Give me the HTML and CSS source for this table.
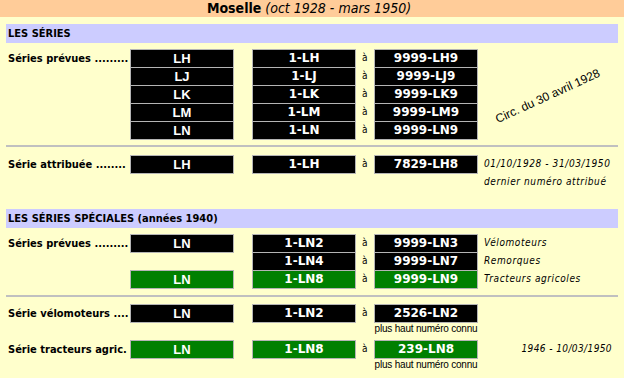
FILE: index.html
```html
<!DOCTYPE html>
<html lang="fr">
<head>
<meta charset="utf-8">
<title>Moselle</title>
<link rel="stylesheet" href="styles.css">
</head>
<body>
<div class="title"><b>Moselle</b> <i>(oct 1928 - mars 1950)</i></div>
<div class="content">
  <div class="band">LES SÉRIES</div>

  <div class="grid rows5">
    <div class="label">Séries prévues .........</div>
    <div class="plate c1 r1">LH</div>
    <div class="plate c1 r2">LJ</div>
    <div class="plate c1 r3">LK</div>
    <div class="plate c1 r4">LM</div>
    <div class="plate c1 r5">LN</div>
    <div class="plate c2 r1">1-LH</div>
    <div class="plate c2 r2">1-LJ</div>
    <div class="plate c2 r3">1-LK</div>
    <div class="plate c2 r4">1-LM</div>
    <div class="plate c2 r5">1-LN</div>
    <div class="a r1">à</div>
    <div class="a r2">à</div>
    <div class="a r3">à</div>
    <div class="a r4">à</div>
    <div class="a r5">à</div>
    <div class="plate c3 r1">9999-LH9</div>
    <div class="plate c3 r2">9999-LJ9</div>
    <div class="plate c3 r3">9999-LK9</div>
    <div class="plate c3 r4">9999-LM9</div>
    <div class="plate c3 r5">9999-LN9</div>
    <div class="circ"><span>Circ. du 30 avril 1928</span></div>
  </div>

  <hr class="sep sep1">

  <div class="grid rowsub attr">
    <div class="label">Série attribuée ........</div>
    <div class="plate c1 r1">LH</div>
    <div class="plate c2 r1">1-LH</div>
    <div class="a r1">à</div>
    <div class="plate c3 r1">7829-LH8</div>
    <div class="note r1">01/10/1928 - 31/03/1950</div>
    <div class="note sub r2">dernier numéro attribué</div>
  </div>

  <div class="band band2">LES SÉRIES SPÉCIALES (années 1940)</div>

  <div class="grid rows3">
    <div class="label">Séries prévues .........</div>
    <div class="plate c1 r1">LN</div>
    <div class="plate green c1 r3">LN</div>
    <div class="plate c2 r1">1-LN2</div>
    <div class="plate c2 r2">1-LN4</div>
    <div class="plate green c2 r3">1-LN8</div>
    <div class="a r1">à</div>
    <div class="a r2">à</div>
    <div class="a r3">à</div>
    <div class="plate c3 r1">9999-LN3</div>
    <div class="plate c3 r2">9999-LN7</div>
    <div class="plate green c3 r3">9999-LN9</div>
    <div class="note r1">Vélomoteurs</div>
    <div class="note r2">Remorques</div>
    <div class="note r3">Tracteurs agricoles</div>
  </div>

  <hr class="sep sep2">

  <div class="grid rowsub velo">
    <div class="label">Série vélomoteurs ....</div>
    <div class="plate c1 r1">LN</div>
    <div class="plate c2 r1">1-LN2</div>
    <div class="a r1">à</div>
    <div class="plate c3 r1">2526-LN2</div>
    <div class="known r2">plus haut numéro connu</div>
  </div>

  <div class="grid rowsub tract">
    <div class="label">Série tracteurs agric.</div>
    <div class="plate green c1 r1">LN</div>
    <div class="plate green c2 r1">1-LN8</div>
    <div class="a r1">à</div>
    <div class="plate green c3 r1">239-LN8</div>
    <div class="note dates r1">1946 - 10/03/1950</div>
    <div class="known r2">plus haut numéro connu</div>
  </div>
</div>
</body>
</html>
```

FILE: styles.css
```css
html, body {
  margin: 0;
  padding: 0;
}
body {
  background: #ffffcc;
  color: #000;
  font-family: "DejaVu Sans Condensed", "DejaVu Sans", sans-serif;
  font-size: 11px;
  width: 624px;
  height: 378px;
  overflow: hidden;
}
.title {
  background: #ffcc99;
  height: 17px;
  line-height: 17px;
  text-align: center;
  font-size: 14px;
  padding-right: 6px;
}
.title i {
  font-weight: normal;
}
.content {
  padding: 0 6px;
}
.band {
  margin-top: 7px;
  height: 19px;
  line-height: 19px;
  background: #ccccff;
  padding-left: 2px;
  font-weight: bold;
  font-size: 11px;
}
.band2 {
  margin-top: 18px;
}
.grid {
  display: grid;
  grid-template-columns: 124px 104px 18px 104px 18px 104px 1fr;
  margin-top: 6px;
}
.rows5 { grid-template-rows: repeat(5, 18px); }
.rows3 { grid-template-rows: repeat(3, 18px); margin-top: 6px; }
.rowsub { grid-template-rows: 18px 18px; }
.attr { margin-top: 8px; }
.velo { margin-top: 7px; }
.tract { margin-top: 0; }
.label {
  grid-column: 1;
  grid-row: 1;
  padding-left: 2px;
  font-weight: bold;
  line-height: 19px;
  white-space: nowrap;
}
.plate {
  box-sizing: border-box;
  height: 19px;
  border: 1px solid #b4b4b4;
  background: #000;
  color: #fff;
  text-align: center;
  line-height: 17px;
  font-family: "DejaVu Sans", sans-serif;
  font-weight: bold;
  font-size: 12px;
}
.plate.green { background: #008000; }
.c1 {
  grid-column: 2;
  font-family: "Liberation Sans", sans-serif;
  font-size: 13px;
}
.c2 { grid-column: 4; }
.c3 { grid-column: 6; }
.a {
  grid-column: 5;
  padding-left: 6px;
  line-height: 18px;
  font-size: 10px;
}
.r1 { grid-row: 1; }
.r2 { grid-row: 2; }
.r3 { grid-row: 3; }
.r4 { grid-row: 4; }
.r5 { grid-row: 5; }
.note {
  grid-column: 7;
  padding-left: 6px;
  font-style: italic;
  font-size: 10px;
  letter-spacing: 0.6px;
  line-height: 18px;
  white-space: nowrap;
}
.note.sub {
  line-height: 14px;
  padding-top: 2px;
}
.note.dates {
  text-align: right;
  padding-right: 6px;
  letter-spacing: 0.4px;
}
.known {
  grid-column: 6;
  text-align: center;
  font-family: "Liberation Sans", sans-serif;
  font-size: 10px;
  line-height: 12px;
  padding-top: 1px;
  letter-spacing: -0.2px;
}
.circ {
  grid-column: 7;
  grid-row: 1 / 6;
  display: flex;
  align-items: center;
  justify-content: center;
  padding-top: 4px;
}
.circ span {
  display: block;
  font-family: "Liberation Sans", sans-serif;
  font-size: 12px;
  white-space: nowrap;
  transform: rotate(-24.6deg);
}
.sep {
  border: 0;
  height: 2px;
  background: #c0c0c0;
  margin: 6px 0 0;
}
.sep2 { margin-top: 7px; }
```
